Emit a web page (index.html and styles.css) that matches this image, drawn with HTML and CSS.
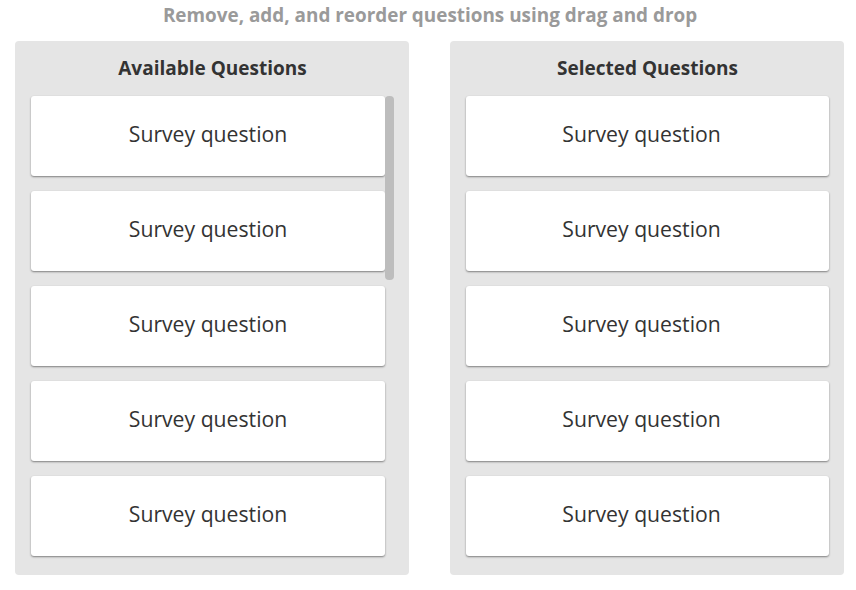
FILE: index.html
```html
<!DOCTYPE html>
<html>
<head>
<meta charset="utf-8">
<link rel="stylesheet" href="styles.css">
</head>
<body>
  <h1 class="title">Remove, add, and reorder questions using drag and drop</h1>
  <div class="boards">
    <section class="panel">
      <h2 class="panel-title">Available Questions</h2>
      <div class="list-wrap">
        <div class="list">
          <div class="card"><span>Survey question</span></div>
          <div class="card"><span>Survey question</span></div>
          <div class="card"><span>Survey question</span></div>
          <div class="card"><span>Survey question</span></div>
          <div class="card"><span>Survey question</span></div>
        </div>
        <div class="scroll-track"><div class="scroll-thumb"></div></div>
      </div>
    </section>
    <section class="panel">
      <h2 class="panel-title">Selected Questions</h2>
      <div class="list-wrap">
        <div class="list">
          <div class="card card-wide"><span>Survey question</span></div>
          <div class="card card-wide"><span>Survey question</span></div>
          <div class="card card-wide"><span>Survey question</span></div>
          <div class="card card-wide"><span>Survey question</span></div>
          <div class="card card-wide"><span>Survey question</span></div>
        </div>
      </div>
    </section>
  </div>
</body>
</html>
```

FILE: styles.css
```css
* { box-sizing: border-box; }
html, body { margin: 0; padding: 0; background: #fff; }
body {
  font-family: "Open Sans", "Liberation Sans", sans-serif;
  width: 856px;
  height: 590px;
  overflow: hidden;
}
.title {
  margin: 0;
  padding-top: 2px;
  height: 41px;
  text-align: center;
  font-size: 18.9px;
  line-height: 26px;
  font-weight: 700;
  color: #9a9a9a;
  padding-left: 4px;
}
.boards {
  display: flex;
  gap: 41px;
  padding-left: 15px;
}
.panel {
  width: 394px;
  height: 534px;
  background: #e5e5e5;
  border-radius: 4px;
  padding: 0 15px 0 16px;
}
.panel-title {
  margin: 0;
  height: 55px;
  padding-top: 14px;
  text-align: center;
  font-size: 19px;
  line-height: 27px;
  font-weight: 700;
  color: #333;
}
.list-wrap {
  display: flex;
  width: 363px;
}
.list {
  flex: 1;
  display: flex;
  flex-direction: column;
  gap: 15px;
}
.card {
  height: 80px;
  background: #fff;
  border-radius: 3px;
  box-shadow: 0 1px 2px rgba(0,0,0,0.45);
  display: flex;
  align-items: center;
  justify-content: center;
  font-size: 21.2px;
  color: #333;
  padding-bottom: 6px;
}
.card-wide {
  padding-right: 12px;
}
.scroll-track {
  width: 9px;
  flex: none;
}
.scroll-thumb {
  width: 9px;
  height: 184px;
  background: #bdbdbd;
  border-radius: 4px;
}
```
